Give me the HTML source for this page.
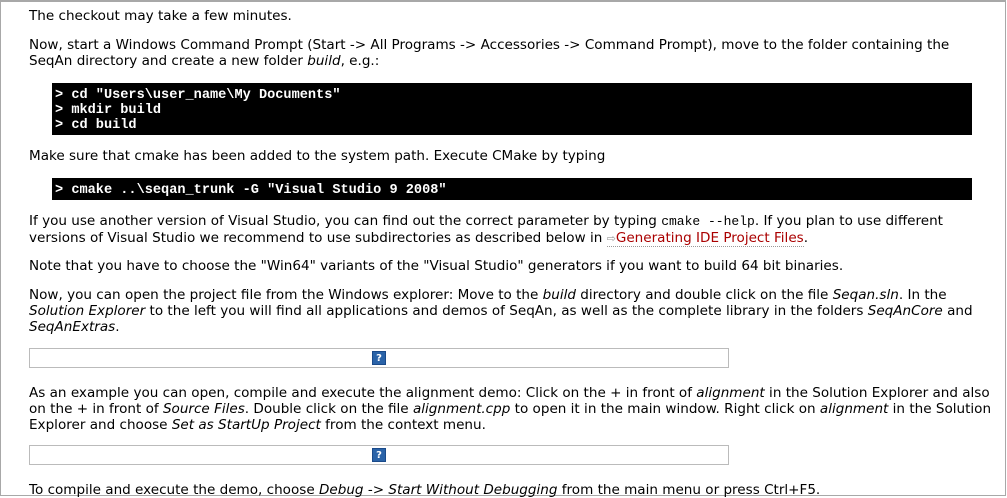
<!DOCTYPE html>
<html><head><meta charset="utf-8"><style>
body{margin:0;width:1007px;height:497px;overflow:hidden;background:#fff;position:relative;font-family:"DejaVu Sans","Liberation Sans",sans-serif;font-size:13.55px;color:#000}
.frame{position:absolute;left:0;top:0;width:1006px;height:496px;border:1px solid #a8a8a8;border-width:2px 1px 1px 1px;box-sizing:border-box}
.t{position:absolute;left:29px;white-space:nowrap;line-height:16px}
.code{position:absolute;left:52px;width:920px;background:#000;color:#fff;font-family:"Liberation Mono",monospace;font-weight:bold;font-size:13.6px;line-height:15px;padding:5px 0 3px 3px;box-sizing:border-box;white-space:pre}
code{font-family:"Liberation Mono",monospace;font-size:13px}
a{color:#a00;text-decoration:none;border-bottom:1px dotted #999}
.ar{color:#999;font-size:11px}
.box{position:absolute;left:29px;width:700px;height:20px;border:1px solid #bbb;box-sizing:border-box}
.q{position:absolute;left:342px;top:2px;width:14px;height:14px;background:#2a63a8;border:1px solid #1a4a8a;box-sizing:border-box;color:#fff;font-size:10px;font-weight:bold;text-align:center;line-height:13px}
</style></head><body>
<div class="frame"></div>
<div class="t" style="top:8px">The checkout may take a few minutes.</div>
<div class="t" style="top:37px">Now, start a Windows Command Prompt (Start -&gt; All Programs -&gt; Accessories -&gt; Command Prompt), move to the folder containing the<br>SeqAn directory and create a new folder <i>build</i>, e.g.:</div>
<div class="code" style="top:83px;height:52px">&gt; cd "Users\user_name\My Documents"
&gt; mkdir build
&gt; cd build</div>
<div class="t" style="top:148px">Make sure that cmake has been added to the system path. Execute CMake by typing</div>
<div class="code" style="top:178px;height:22px">&gt; cmake ..\seqan_trunk -G "Visual Studio 9 2008"</div>
<div class="t" style="top:213px">If you use another version of Visual Studio, you can find out the correct parameter by typing <code>cmake --help</code>. If you plan to use different<br>versions of Visual Studio we recommend to use subdirectories as described below in <a><span class="ar">⇨</span>Generating IDE Project Files</a>.</div>
<div class="t" style="top:258px">Note that you have to choose the "Win64" variants of the "Visual Studio" generators if you want to build 64 bit binaries.</div>
<div class="t" style="top:287px">Now, you can open the project file from the Windows explorer: Move to the <i>build</i> directory and double click on the file <i>Seqan.sln</i>. In the<br><i>Solution Explorer</i> to the left you will find all applications and demos of SeqAn, as well as the complete library in the folders <i>SeqAnCore</i> and<br><i>SeqAnExtras</i>.</div>
<div class="box" style="top:348px"><div class="q">?</div></div>
<div class="t" style="top:385px">As an example you can open, compile and execute the alignment demo: Click on the + in front of <i>alignment</i> in the Solution Explorer and also<br>on the + in front of <i>Source Files</i>. Double click on the file <i>alignment.cpp</i> to open it in the main window. Right click on <i>alignment</i> in the Solution<br>Explorer and choose <i>Set as StartUp Project</i> from the context menu.</div>
<div class="box" style="top:445px"><div class="q">?</div></div>
<div class="t" style="top:482px">To compile and execute the demo, choose <i>Debug</i> -&gt; <i>Start Without Debugging</i> from the main menu or press Ctrl+F5.</div>
</body></html>
